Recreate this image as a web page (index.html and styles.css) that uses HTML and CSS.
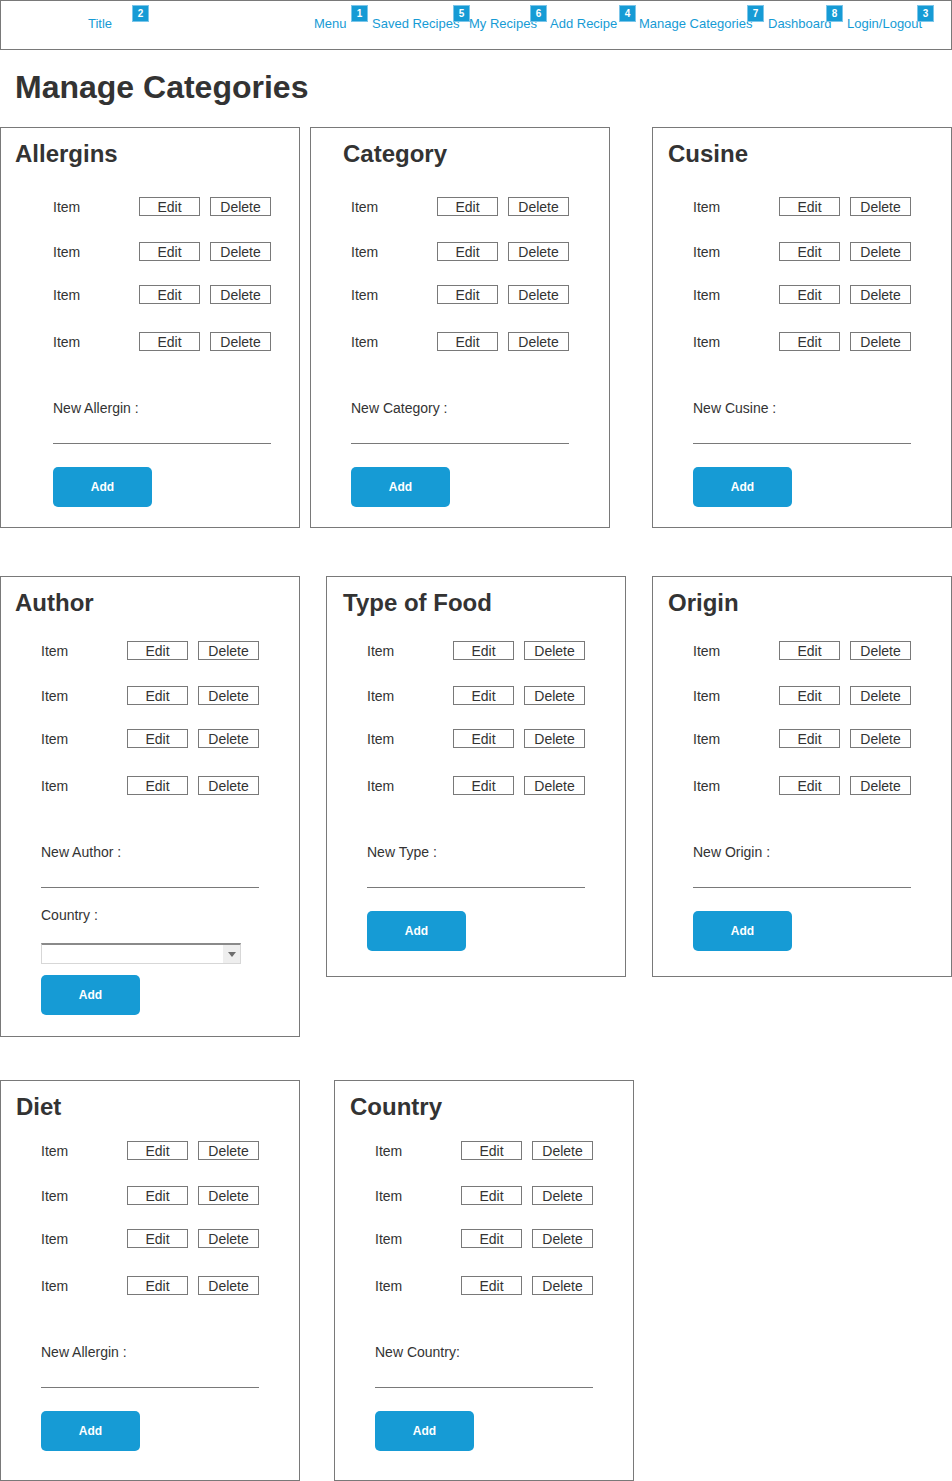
FILE: index.html
```html
<!DOCTYPE html>
<html lang="en">
<head>
<meta charset="utf-8">
<title>Manage Categories</title>
<link rel="stylesheet" href="styles.css">
</head>
<body>
<nav class="topnav">
  <div class="nav-item nav-item--title"><a class="nav-link">Title</a><span class="badge">2</span></div>
  <div class="nav-item nav-item--menu"><a class="nav-link">Menu</a><span class="badge">1</span></div>
  <div class="nav-item nav-item--saved"><a class="nav-link">Saved Recipes</a><span class="badge">5</span></div>
  <div class="nav-item nav-item--mine"><a class="nav-link">My Recipes</a><span class="badge">6</span></div>
  <div class="nav-item nav-item--add"><a class="nav-link">Add Recipe</a><span class="badge">4</span></div>
  <div class="nav-item nav-item--manage"><a class="nav-link">Manage Categories</a><span class="badge">7</span></div>
  <div class="nav-item nav-item--dash"><a class="nav-link">Dashboard</a><span class="badge">8</span></div>
  <div class="nav-item nav-item--login"><a class="nav-link">Login/Logout</a><span class="badge">3</span></div>
</nav>

<h1 class="page-title">Manage Categories</h1>

<main class="board">
  <div class="card-row card-row--first">
    <section class="card card--wide">
      <h2 class="card-title">Allergins</h2>
      <ul class="item-list">
        <li class="item-row"><span class="item-name">Item</span><span class="btn-outline">Edit</span><span class="btn-outline">Delete</span></li>
        <li class="item-row"><span class="item-name">Item</span><span class="btn-outline">Edit</span><span class="btn-outline">Delete</span></li>
        <li class="item-row"><span class="item-name">Item</span><span class="btn-outline">Edit</span><span class="btn-outline">Delete</span></li>
        <li class="item-row"><span class="item-name">Item</span><span class="btn-outline">Edit</span><span class="btn-outline">Delete</span></li>
      </ul>
      <div class="field-label">New Allergin :</div>
      <div class="field-line"></div>
      <button class="btn-add">Add</button>
    </section>

    <section class="card card--category">
      <h2 class="card-title card-title--indent">Category</h2>
      <ul class="item-list">
        <li class="item-row"><span class="item-name">Item</span><span class="btn-outline">Edit</span><span class="btn-outline">Delete</span></li>
        <li class="item-row"><span class="item-name">Item</span><span class="btn-outline">Edit</span><span class="btn-outline">Delete</span></li>
        <li class="item-row"><span class="item-name">Item</span><span class="btn-outline">Edit</span><span class="btn-outline">Delete</span></li>
        <li class="item-row"><span class="item-name">Item</span><span class="btn-outline">Edit</span><span class="btn-outline">Delete</span></li>
      </ul>
      <div class="field-label">New Category :</div>
      <div class="field-line"></div>
      <button class="btn-add">Add</button>
    </section>

    <section class="card card--cusine">
      <h2 class="card-title">Cusine</h2>
      <ul class="item-list">
        <li class="item-row"><span class="item-name">Item</span><span class="btn-outline">Edit</span><span class="btn-outline">Delete</span></li>
        <li class="item-row"><span class="item-name">Item</span><span class="btn-outline">Edit</span><span class="btn-outline">Delete</span></li>
        <li class="item-row"><span class="item-name">Item</span><span class="btn-outline">Edit</span><span class="btn-outline">Delete</span></li>
        <li class="item-row"><span class="item-name">Item</span><span class="btn-outline">Edit</span><span class="btn-outline">Delete</span></li>
      </ul>
      <div class="field-label">New Cusine :</div>
      <div class="field-line"></div>
      <button class="btn-add">Add</button>
    </section>
  </div>

  <div class="card-row card-row--second">
    <section class="card card--tall">
      <h2 class="card-title card-title--flush">Author</h2>
      <ul class="item-list">
        <li class="item-row"><span class="item-name">Item</span><span class="btn-outline">Edit</span><span class="btn-outline">Delete</span></li>
        <li class="item-row"><span class="item-name">Item</span><span class="btn-outline">Edit</span><span class="btn-outline">Delete</span></li>
        <li class="item-row"><span class="item-name">Item</span><span class="btn-outline">Edit</span><span class="btn-outline">Delete</span></li>
        <li class="item-row"><span class="item-name">Item</span><span class="btn-outline">Edit</span><span class="btn-outline">Delete</span></li>
      </ul>
      <div class="field-label">New Author :</div>
      <div class="field-line"></div>
      <div class="field-label field-label--second">Country :</div>
      <div class="droplist"><span class="droplist-arrow"></span></div>
      <button class="btn-add btn-add--tight">Add</button>
    </section>

    <section class="card">
      <h2 class="card-title card-title--food">Type of Food</h2>
      <ul class="item-list">
        <li class="item-row"><span class="item-name">Item</span><span class="btn-outline">Edit</span><span class="btn-outline">Delete</span></li>
        <li class="item-row"><span class="item-name">Item</span><span class="btn-outline">Edit</span><span class="btn-outline">Delete</span></li>
        <li class="item-row"><span class="item-name">Item</span><span class="btn-outline">Edit</span><span class="btn-outline">Delete</span></li>
        <li class="item-row"><span class="item-name">Item</span><span class="btn-outline">Edit</span><span class="btn-outline">Delete</span></li>
      </ul>
      <div class="field-label">New Type :</div>
      <div class="field-line"></div>
      <button class="btn-add">Add</button>
    </section>

    <section class="card">
      <h2 class="card-title">Origin</h2>
      <ul class="item-list">
        <li class="item-row"><span class="item-name">Item</span><span class="btn-outline">Edit</span><span class="btn-outline">Delete</span></li>
        <li class="item-row"><span class="item-name">Item</span><span class="btn-outline">Edit</span><span class="btn-outline">Delete</span></li>
        <li class="item-row"><span class="item-name">Item</span><span class="btn-outline">Edit</span><span class="btn-outline">Delete</span></li>
        <li class="item-row"><span class="item-name">Item</span><span class="btn-outline">Edit</span><span class="btn-outline">Delete</span></li>
      </ul>
      <div class="field-label">New Origin :</div>
      <div class="field-line"></div>
      <button class="btn-add">Add</button>
    </section>
  </div>

  <div class="card-row card-row--third">
    <section class="card">
      <h2 class="card-title">Diet</h2>
      <ul class="item-list">
        <li class="item-row"><span class="item-name">Item</span><span class="btn-outline">Edit</span><span class="btn-outline">Delete</span></li>
        <li class="item-row"><span class="item-name">Item</span><span class="btn-outline">Edit</span><span class="btn-outline">Delete</span></li>
        <li class="item-row"><span class="item-name">Item</span><span class="btn-outline">Edit</span><span class="btn-outline">Delete</span></li>
        <li class="item-row"><span class="item-name">Item</span><span class="btn-outline">Edit</span><span class="btn-outline">Delete</span></li>
      </ul>
      <div class="field-label">New Allergin :</div>
      <div class="field-line"></div>
      <button class="btn-add">Add</button>
    </section>

    <section class="card">
      <h2 class="card-title">Country</h2>
      <ul class="item-list">
        <li class="item-row"><span class="item-name">Item</span><span class="btn-outline">Edit</span><span class="btn-outline">Delete</span></li>
        <li class="item-row"><span class="item-name">Item</span><span class="btn-outline">Edit</span><span class="btn-outline">Delete</span></li>
        <li class="item-row"><span class="item-name">Item</span><span class="btn-outline">Edit</span><span class="btn-outline">Delete</span></li>
        <li class="item-row"><span class="item-name">Item</span><span class="btn-outline">Edit</span><span class="btn-outline">Delete</span></li>
      </ul>
      <div class="field-label">New Country:</div>
      <div class="field-line"></div>
      <button class="btn-add">Add</button>
    </section>
  </div>
</main>
</body>
</html>
```

FILE: styles.css
```css
* {
  box-sizing: border-box;
}

html, body {
  margin: 0;
  padding: 0;
  background: #ffffff;
}

body {
  font-family: "Liberation Sans", Arial, sans-serif;
  color: #333333;
  width: 952px;
}

/* ---------- top navigation ---------- */
.topnav {
  display: flex;
  align-items: flex-start;
  gap: 4px;
  height: 50px;
  border: 1px solid #797979;
  padding-top: 4px;
}

.nav-item {
  position: relative;
  height: 30px;
  flex: none;
}

.nav-item--title  { width: 61px;  margin-left: 87px; }
.nav-item--menu   { width: 54px;  margin-left: 161px; }
.nav-item--saved  { width: 98px; }
.nav-item--mine   { width: 78px;  margin-left: -5px; }
.nav-item--add    { width: 86px;  margin-left: -1px; }
.nav-item--manage { width: 125px; margin-left: -1px; }
.nav-item--dash   { width: 75px; }
.nav-item--login  { width: 87px; }

.nav-link {
  display: block;
  margin-top: 11px;
  font-size: 13px;
  line-height: 15px;
  color: #169bd5;
  white-space: nowrap;
  cursor: pointer;
}

.badge {
  position: absolute;
  top: 0;
  right: 0;
  width: 17px;
  height: 17px;
  background: #169bd5;
  border: 1px solid #7cc6ea;
  color: #ffffff;
  font-size: 10px;
  font-weight: bold;
  line-height: 15px;
  text-align: center;
}

/* ---------- page title ---------- */
.page-title {
  margin: 19px 0 21px 15px;
  font-size: 32px;
  line-height: 37px;
  font-weight: bold;
  color: #333333;
}

/* ---------- board / rows ---------- */
.board {
  display: flex;
  flex-direction: column;
}

.card-row {
  display: flex;
  align-items: flex-start;
}

.card-row--second {
  gap: 26px;
  margin-top: 48px;
}

.card-row--third {
  gap: 34px;
  margin-top: 43px;
}

.card--category { margin-left: 10px; }
.card--cusine   { margin-left: 42px; }

/* ---------- card ---------- */
.card {
  width: 300px;
  height: 401px;
  border: 1px solid #797979;
  padding: 0 0 0 40px;
  display: flex;
  flex-direction: column;
  align-items: flex-start;
  flex: none;
}

.card--wide {
  padding-left: 52px;
}

.card--tall {
  height: 461px;
}

.card-title {
  margin: 12px 0 0 -25px;
  font-size: 24px;
  line-height: 28px;
  font-weight: bold;
  color: #333333;
  white-space: nowrap;
  align-self: stretch;
}

.card--wide .card-title {
  margin-left: -38px;
}

.card-title--flush {
  margin-left: -26px;
}

.card-title--indent {
  margin-left: -8px;
}

.card-title--food {
  margin-left: -24px;
}

.item-list {
  list-style: none;
  margin: 29px 0 0 0;
  padding: 0;
}

.card-row--second .item-list { margin-top: 24px; }
.card-row--third .item-list  { margin-top: 20px; }

.item-row {
  display: flex;
  align-items: center;
  height: 19px;
}

.item-row:nth-child(2) { margin-top: 26px; }
.item-row:nth-child(3) { margin-top: 24px; }
.item-row:nth-child(4) { margin-top: 28px; }

.item-name {
  width: 86px;
  font-size: 14px;
  line-height: 16px;
  color: #333333;
}

.btn-outline {
  width: 61px;
  height: 19px;
  border: 1px solid #797979;
  font-size: 14px;
  line-height: 18px;
  text-align: center;
  color: #333333;
  background: #ffffff;
}

.btn-outline + .btn-outline {
  margin-left: 10px;
}

.field-label {
  margin-top: 49px;
  font-size: 14px;
  line-height: 16px;
  color: #333333;
  white-space: nowrap;
}

.field-label--second {
  margin-top: 19px;
}

.field-line {
  width: 218px;
  height: 28px;
  border-bottom: 1px solid #797979;
}

.btn-add {
  margin-top: 23px;
  width: 99px;
  height: 40px;
  border: none;
  border-radius: 5px;
  background: #169bd5;
  color: #ffffff;
  font-family: "Liberation Sans", Arial, sans-serif;
  font-size: 12px;
  font-weight: bold;
  padding: 0;
}

.btn-add--tight {
  margin-top: 11px;
}

/* ---------- droplist ---------- */
.droplist {
  margin-top: 20px;
  width: 200px;
  height: 21px;
  border: 1px solid #d7d7d7;
  border-top: 2px solid #8a8a8a;
  display: flex;
  justify-content: flex-end;
  background: #ffffff;
}

.droplist-arrow {
  width: 17px;
  height: 100%;
  background: #eeeeee;
  display: flex;
  align-items: center;
  justify-content: center;
}

.droplist-arrow::after {
  content: "";
  width: 0;
  height: 0;
  border-left: 4px solid transparent;
  border-right: 4px solid transparent;
  border-top: 5px solid #6d6d6d;
}
```
